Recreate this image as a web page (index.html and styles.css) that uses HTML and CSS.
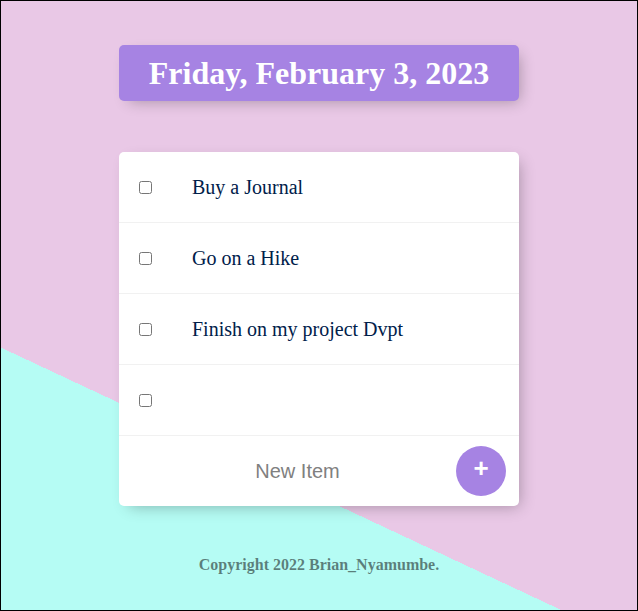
FILE: index.html
```html
<!DOCTYPE html>
<html lang="en">
<head>
<meta charset="utf-8">
<title>To Do List</title>
<link rel="stylesheet" href="styles.css">
</head>
<body>
  <div class="box heading">
    <h1>Friday, February 3, 2023</h1>
  </div>
  <div class="box list">
    <div class="item"><input type="checkbox"><p>Buy a Journal</p></div>
    <div class="item"><input type="checkbox"><p>Go on a Hike</p></div>
    <div class="item"><input type="checkbox"><p>Finish on my project Dvpt</p></div>
    <div class="item"><input type="checkbox"><p></p></div>
    <form class="item new-item">
      <input type="text" class="new-input" placeholder="New Item" autocomplete="off">
      <button type="button" class="add-btn">+</button>
    </form>
  </div>
  <footer class="footer">Copyright 2022 Brian_Nyamumbe.</footer>
</body>
</html>
```

FILE: styles.css
```css
html {
  height: 100%;
  background: linear-gradient(205.1deg, #e9c8e6 585px, #b5fcf4 585px);
}

body {
  margin: 0;
  min-height: 100%;
  box-sizing: border-box;
  border: 1px solid #000;
  padding-top: 44px;
  font-family: "Liberation Serif", "Times New Roman", serif;
}

.box {
  width: 400px;
  margin: 0 auto;
  border-radius: 5px;
  box-shadow: 5px 5px 15px -5px rgba(0, 0, 0, 0.3);
}

.heading {
  background-color: #a683e3;
  text-align: center;
}

.heading h1 {
  margin: 0;
  padding: 10px;
  color: #fff;
  font-size: 32px;
  line-height: 36px;
  font-weight: bold;
}

.list {
  margin-top: 51px;
  background: #fff;
}

.item {
  min-height: 70px;
  display: flex;
  align-items: center;
  border-bottom: 1px solid #f1f1f1;
}

.item:last-child {
  border-bottom: 0;
}

.item input[type="checkbox"] {
  margin: 20px;
  width: 13px;
  height: 13px;
}

.item p {
  margin: 0;
  padding: 20px;
  font-size: 20px;
  color: #00204a;
}

.new-item {
  margin: 0;
  padding-left: 20px;
  height: 70px;
}

.new-input {
  width: 317px;
  height: 60px;
  box-sizing: border-box;
  border: none;
  padding: 10px;
  text-align: center;
  font-family: "Liberation Sans", Arial, sans-serif;
  font-size: 20px;
  background: transparent;
}

.new-input::placeholder {
  color: grey;
  opacity: 1;
}

.new-input:focus {
  outline: none;
}

.add-btn {
  width: 50px;
  height: 50px;
  flex: none;
  border-radius: 50%;
  border: 0;
  background-color: #a683e3;
  color: #fff;
  font-family: "Liberation Sans", Arial, sans-serif;
  font-size: 26px;
  font-weight: bold;
  line-height: 1;
  padding: 0 0 7px;
}

.footer {
  margin-top: 50px;
  text-align: center;
  color: rgba(0, 0, 0, 0.5);
  font-size: 16px;
  font-weight: bold;
}
```
